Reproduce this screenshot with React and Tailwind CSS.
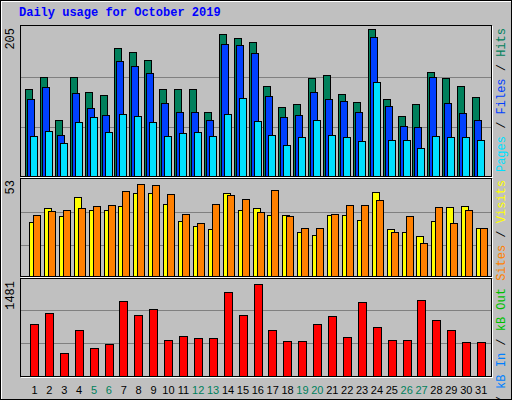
const hits = [89,77,120,77,92,95,48,52,60,89,89,89,112,34,38,42,86,107,104,78,75,94,102,29,99,116,104,72,78,86,97]
const files = [99,87,135,93,108,115,61,66,73,103,112,112,120,44,45,53,96,117,115,92,99,101,112,37,106,126,127,77,103,113,120]
const pages = [136,131,143,122,117,132,114,116,122,136,133,132,136,114,98,121,135,145,137,120,135,137,141,82,140,140,148,136,137,137,140]
const visits = [222,208,216,197,210,210,206,193,193,204,221,226,229,193,210,208,215,215,232,235,215,215,220,192,229,232,236,221,207,206,228]
const sites = [215,211,210,208,206,205,191,184,185,194,214,223,204,195,199,212,190,216,228,228,214,205,205,200,232,216,243,207,223,210,228]
const kbf = [324,313,353,330,348,344,301,315,309,340,336,338,338,292,315,284,330,341,341,324,316,337,302,327,340,340,300,320,330,342,342]
const weekend = [5, 6, 12, 13, 19, 20, 26, 27]

const cx = (i) => 34 + i * 14.9

const Bar = ({ x, y, w, bottom, fill }) => (
  <rect x={x + 0.5} y={y + 0.5} width={w - 1} height={bottom - y + 2} fill={fill} stroke="#000" strokeWidth="1" />
)

const Grid = ({ ys }) =>
  ys.map((y) => <line key={y} x1="21" x2="491" y1={y + 0.5} y2={y + 0.5} stroke="#808080" strokeWidth="1" />)

export default function App() {
  return (
    <div className="w-[512px] h-[400px] overflow-hidden bg-[#c0c0c0] border border-black font-[Liberation_Mono] shadow-[inset_1px_1px_0_#fff]">
      <div className="h-[24px] pl-[18px] pt-[6px] text-[12px] leading-none font-bold text-[#0000ff]">
        Daily usage for October 2019
      </div>
      <div className="flex h-[353px]">
        <div className="w-[19px] flex flex-col text-[12px] leading-none">
          <div className="h-[153px] flex flex-col justify-start items-center pt-[3px]"><span className="[writing-mode:vertical-rl] rotate-180">205</span></div>
          <div className="h-[100px] flex flex-col justify-start items-center pt-[2px]"><span className="[writing-mode:vertical-rl] rotate-180">53</span></div>
          <div className="h-[100px] flex flex-col justify-start items-center pt-[3px]"><span className="[writing-mode:vertical-rl] rotate-180">1481</span></div>
        </div>
        <div className="flex flex-col w-[472px]">
          <div className="h-[152px] border border-black shadow-[1px_1px_0_#fff]">
            <svg width="470" height="150" viewBox="21 26 470 150" className="block">
              <Grid ys={[77, 127]} />
              {hits.map((h, i) => (
                <g key={i}>
                  <Bar x={Math.round(cx(i) - 9)} y={h} w={8} bottom={176} fill="#00805c" />
                  <Bar x={Math.round(cx(i) - 7)} y={files[i]} w={8} bottom={176} fill="#0040ff" />
                  <Bar x={Math.round(cx(i) - 4)} y={pages[i]} w={8} bottom={176} fill="#00e0ff" />
                </g>
              ))}
            </svg>
          </div>
          <div className="h-[99px] mt-px border border-black shadow-[1px_1px_0_#fff]">
            <svg width="470" height="97" viewBox="21 179 470 97" className="block">
              <Grid ys={[212, 245]} />
              {visits.map((v, i) => (
                <g key={i}>
                  <Bar x={Math.round(cx(i) - 5)} y={v} w={8} bottom={276} fill="#ffff00" />
                  <Bar x={Math.round(cx(i) - 1)} y={sites[i]} w={8} bottom={276} fill="#ff8000" />
                </g>
              ))}
            </svg>
          </div>
          <div className="h-[99px] mt-px border border-black shadow-[1px_1px_0_#fff]">
            <svg width="470" height="97" viewBox="21 279 470 97" className="block">
              <Grid ys={[310, 343]} />
              {kbf.map((k, i) => (
                <Bar key={i} x={Math.round(cx(i) - 4)} y={k} w={9} bottom={376} fill="#ff0000" />
              ))}
            </svg>
          </div>
        </div>
        <div className="w-[19px] flex flex-col items-center text-[12px] leading-none">
          <div className="h-[153px] flex flex-col justify-start pt-[3px]">
            <span className="[writing-mode:vertical-rl] rotate-180 whitespace-nowrap">
              <span className="text-[#00e0ff]">Pages</span> / <span className="text-[#0040ff]">Files</span> / <span className="text-[#00805c]">Hits</span>
            </span>
          </div>
          <div className="h-[200px] flex flex-col justify-start pt-[2px]">
            <span className="[writing-mode:vertical-rl] rotate-180 whitespace-nowrap">
              <span className="text-[#ff0000]">kB F</span> / <span className="text-[#0080ff]">kB In</span> / <span className="text-[#00c000]">kB Out</span> <span className="text-[#ff8000]">Sites</span> / <span className="text-[#ffff00]">Visits</span>
            </span>
          </div>
        </div>
      </div>
      <div className="flex pl-[26px] pt-[7px] font-[Liberation_Sans] text-[11px] leading-none">
        {Array.from({ length: 31 }, (_, i) => (
          <div key={i} className={`w-[14.9px] text-center ${weekend.includes(i + 1) ? "text-[#00805c]" : "text-black"}`}>
            {i + 1}
          </div>
        ))}
      </div>
    </div>
  )
}
